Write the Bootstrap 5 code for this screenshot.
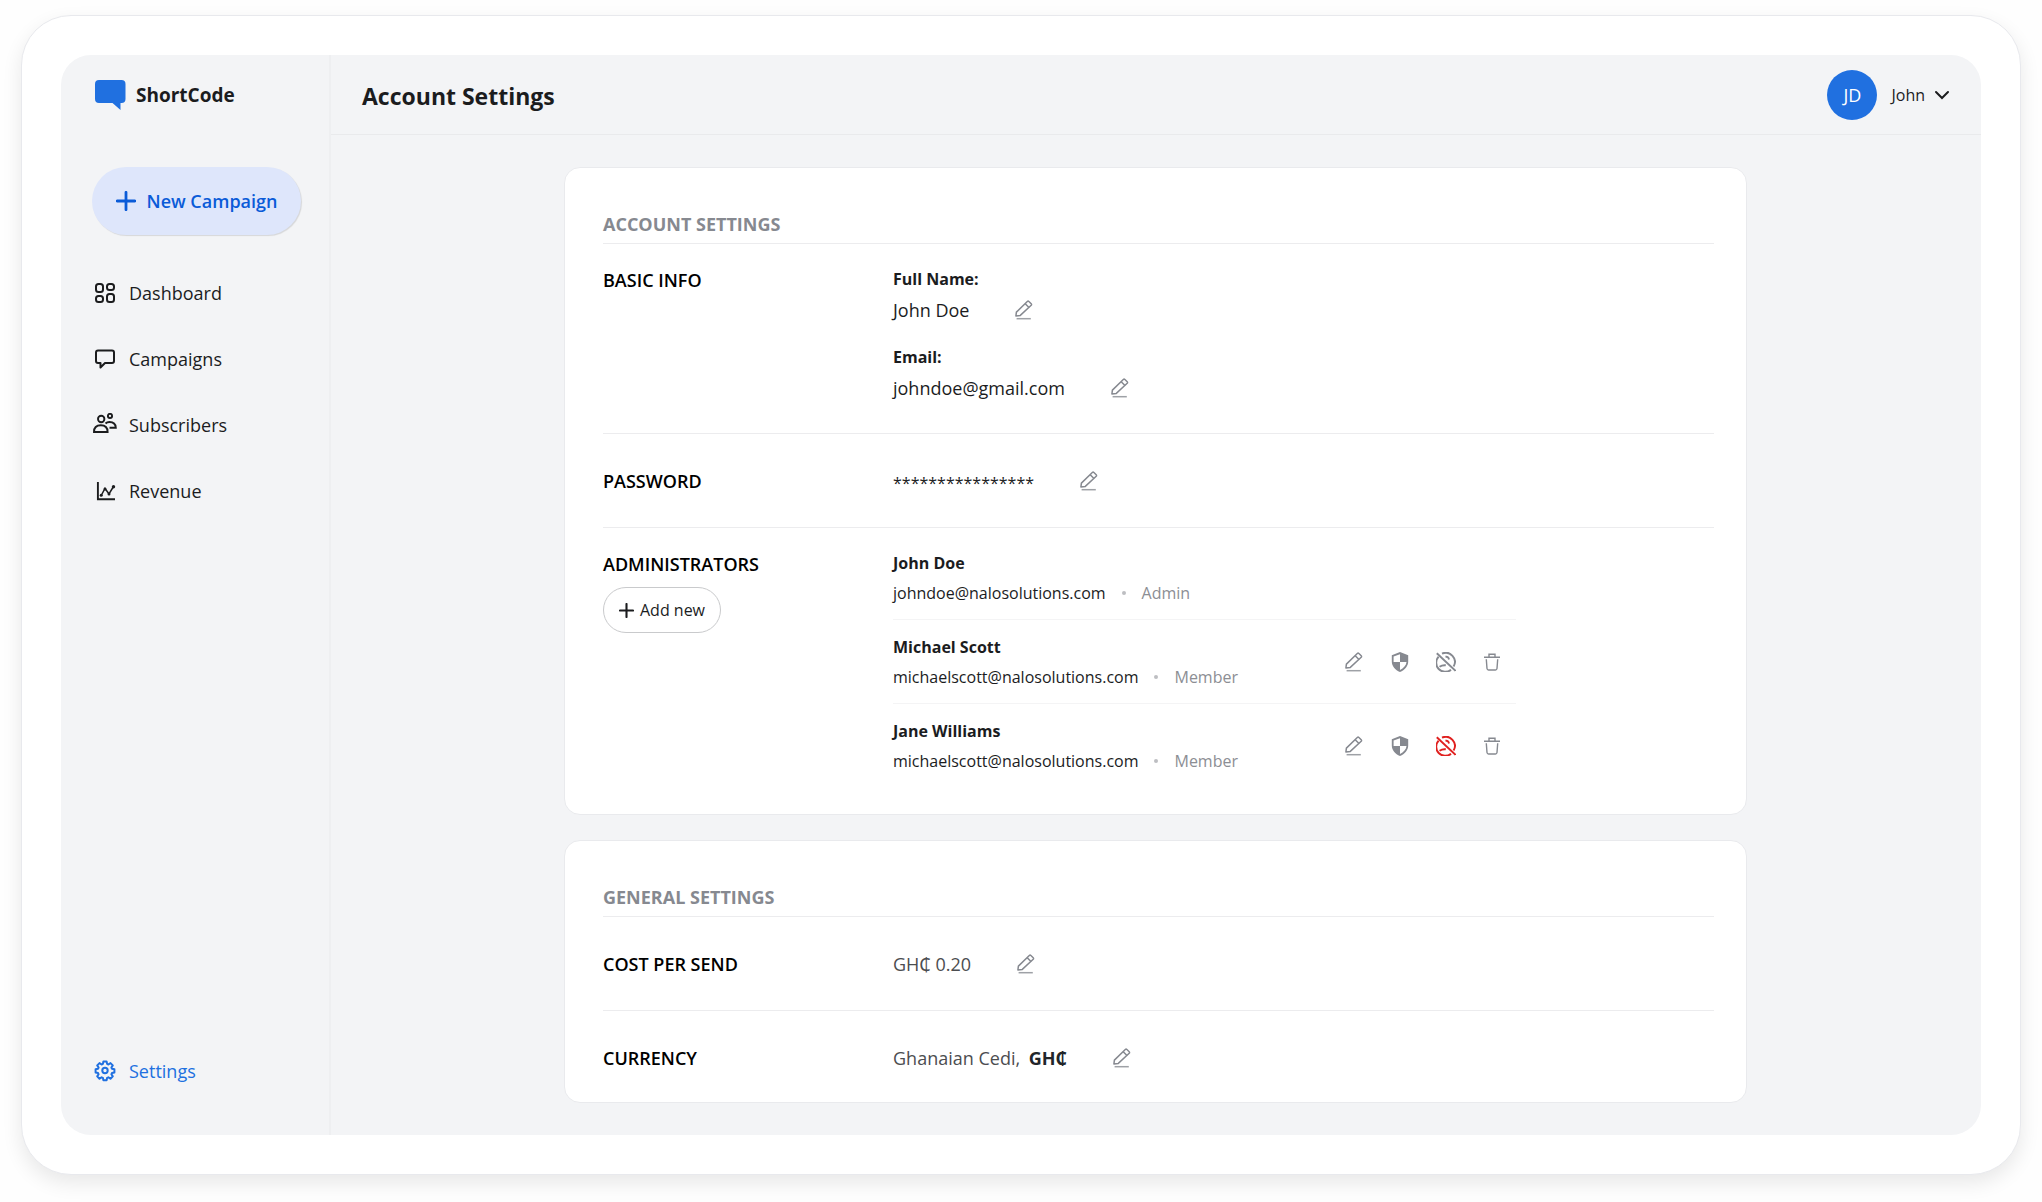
<!DOCTYPE html>
<html lang="en">
<head>
<meta charset="utf-8">
<meta name="viewport" content="width=device-width, initial-scale=1">
<title>ShortCode – Account Settings</title>
<link href="https://cdn.jsdelivr.net/npm/bootstrap@5.3.0/dist/css/bootstrap.min.css" rel="stylesheet">
<style>
  body { font-family: "Open Sans", "Noto Sans", sans-serif; color: #1b1c1e; background: #fefefe; padding: 15px 21px 27px 21px; font-size: 18px; line-height: 24px; }
  .frame { background: #fff; border: 1px solid #e8e9ed; border-radius: 50px; padding: 39px; box-shadow: 0 8px 20px rgba(0,0,0,.09); }
  .shell { background: #f3f4f6; border-radius: 30px; overflow: hidden; }
  .sidebar { width: 270px; border-right: 2px solid #eeeff1; padding: 25px 28px 52px 31px; }
  .brand { font-size: 19px; font-weight: 700; gap: 10px; padding-left: 3px; line-height: 30px; color: #1b1c1e; }
  .btn-campaign { height: 68px; margin-top: 57px; border-radius: 34px; background: #dee6fb; color: #0a5bd8; font-size: 18px; font-weight: 600; gap: 11px; box-shadow: 1px 1px 1px rgba(0,0,0,.12); border: 0; padding: 0; }
  .side-nav { gap: 42px; margin-top: 46px; }
  .side-nav .nav-link, .nav-link.settings { padding: 0; gap: 12px; color: #1b1c1e; margin-left: 1px; }
  .nav-link.settings { color: #2070e0; }
  .topbar { height: 80px; border-bottom: 1px solid #e9eaec; padding: 0 31px; }
  .topbar h1 { font-size: 23px; line-height: 32px; font-weight: 700; padding-top: 2px; }
  .avatar { width: 50px; height: 50px; background: #2070e0; color: #fff; font-weight: 500; font-size: 18px; margin-right: 5px; }
  .btn-user { gap: 9px; font-size: 16px; font-weight: 500; padding: 0; border: 0; color: #1b1c1e; line-height: 24px; }
  .content { padding: 32px 25px 32px 24px; gap: 25px; }
  .panel { width: 100%; max-width: 1183px; border: 1px solid #e9eaed; border-radius: 16px; background: #fff; padding: 44px 32px 0 38px; margin: 0 auto; }
  .panel h2 { font-size: 18px; line-height: 24px; font-weight: 700; color: #868990; padding-bottom: 7px; border-bottom: 1px solid #ececee; }
  .setting { border-bottom: 1px solid #ececee; padding: 34px 0 33px; }
  .setting.tall { padding-top: 23px; }
  .setting:last-child { border-bottom: 0; padding-bottom: 31px; }
  .setting-name { width: 290px; flex: none; }
  .setting-name h3 { font-size: 18px; line-height: 26px; font-weight: 600; color: #000; }
  .field-list { gap: 23px; }
  .caption { font-size: 16px; font-weight: 700; margin-bottom: 6px; }
  .field-list .caption { margin-bottom: 7px; }
  .value { gap: 45px; }
  .value-soft { color: #4c4d50; }
  .value-masked { font-size: 16px; line-height: 22px; }
  .btn-add { margin-top: 10px; height: 46px; width: 118px; border: 1px solid #c9cacc; border-radius: 23px; font-size: 16px; font-weight: 500; padding: 0; gap: 6px; color: #1b1c1e; }
  .icon-btn { border: 0; padding: 0; background: none; color: #868990; width: 20px; height: 20px; }
  .icon-btn.danger { color: #e0201f; }
  .icon-btn svg { display: block; }
  .admins { width: 623px; }
  .admin { padding: 15px 14px 14px 0; border-bottom: 1px solid #f4f4f5; font-size: 16px; }
  .admin:first-child { padding-top: 0; }
  .admin:last-child { border-bottom: 0; padding-bottom: 10px; }
  .role { color: #8c8e94; }
  .dot { width: 4px; height: 4px; background: #bdbec2; margin: 0 16px; }
  .actions { gap: 26px; }
</style>
</head>
<body class="min-vh-100 d-flex flex-column">
<svg class="d-none" aria-hidden="true">
  <symbol id="pencil" viewBox="0 0 20 20"><g fill="none" stroke="currentColor" stroke-width="1.5" stroke-linejoin="round"><path d="M1.900 16 2.400 12.100 13.300 1.500Q14.100.8 14.900 1.500L17.200 3.700Q17.900 4.500 17.200 5.300L6.300 15.400Z"/><path d="m11.200 3.700 3.800 3.800"/><path d="M2.600 18.700H16.800" opacity=".8"/></g></symbol>
  <symbol id="shield" viewBox="0 0 20 20"><path fill="currentColor" d="M10 0 18.200 3.200V9.500C18.200 14 14.800 18.200 10 20 5.200 18.200 1.800 14 1.800 9.500V3.200ZM10 2.200 3.600 4.600V10H10ZM10 10V17.900C13.600 16.200 16.200 13.300 16.500 10Z" fill-rule="evenodd"/></symbol>
  <symbol id="globe-off" viewBox="0 0 20 20"><g fill="none" stroke="currentColor" stroke-width="1.900"><path d="M.8 1.300 19.500 18.800"/><path d="M6 1.700A9 9 0 0 1 17.600 14.400M2.600 4.700A9 9 0 0 0 15 17.700"/><path d="M9.500 4.800Q12.500 4.300 13 7.500M3.500 14.800Q6.500 12.800 9.800 13.300"/></g></symbol>
  <symbol id="trash" viewBox="0 0 20 20"><g fill="none" stroke="currentColor" stroke-width="1.400"><path d="M2 5.200H18M7 5V2.300H13V5M4.300 7.200 5 16.500Q5.200 18 6.500 18H13.500Q14.800 18 15 16.500L15.700 7.200"/></g></symbol>
  <symbol id="plus" viewBox="0 0 20 20"><path d="M10 1.300V18.700M1.300 10H18.700" fill="none" stroke="currentColor" stroke-width="2.800" stroke-linecap="round"/></symbol>
</svg>
<div class="frame flex-grow-1 d-flex">
  <div class="shell d-flex flex-grow-1">
    <aside class="sidebar d-flex flex-column flex-shrink-0">
      <a href="#" class="brand d-flex align-items-center text-decoration-none">
        <svg width="31" height="30" viewBox="0 0 31 30" fill="#2070e0" aria-hidden="true"><path d="M4 0H26.500Q30.500 0 30.500 4V19Q30.500 23 26.500 23H25.500V30L17.500 23H4Q0 23 0 19V4Q0 0 4 0Z"/></svg>
        ShortCode
      </a>
      <button type="button" class="btn btn-campaign w-100 d-flex align-items-center justify-content-center"><svg width="20" height="20" aria-hidden="true"><use href="#plus"/></svg>New Campaign</button>
      <nav class="nav flex-column side-nav">
        <a href="#" class="nav-link d-flex align-items-center">
          <svg width="24" height="24" viewBox="0 0 24 24" fill="none" stroke="currentColor" stroke-width="2" aria-hidden="true"><rect x="3" y="3" width="7" height="8" rx="2.500"/><rect x="14" y="3" width="7" height="6" rx="2.500"/><rect x="3" y="15" width="7" height="6" rx="2.500"/><rect x="14" y="13" width="7" height="8" rx="2.500"/></svg>Dashboard</a>
        <a href="#" class="nav-link d-flex align-items-center">
          <svg width="24" height="24" viewBox="0 0 24 24" fill="none" stroke="currentColor" stroke-width="2" stroke-linejoin="round" aria-hidden="true"><path d="M5 3.500H19Q21 3.500 21 5.500V14Q21 16 19 16H12L7.500 20.500V16H5Q3 16 3 14V5.500Q3 3.500 5 3.500Z"/></svg>Campaigns</a>
        <a href="#" class="nav-link d-flex align-items-center">
          <svg width="24" height="24" viewBox="0 0 24 24" fill="none" stroke="currentColor" stroke-width="1.900" aria-hidden="true"><circle cx="8.200" cy="6" r="3.200"/><circle cx="17" cy="2.900" r="2.100"/><path d="M1 19Q1 12.300 7.800 12.300T14.600 19ZM12.500 10.500Q14 9 16.500 9 22.500 9 22.800 14.700H16.500"/></svg>Subscribers</a>
        <a href="#" class="nav-link d-flex align-items-center">
          <svg width="24" height="24" viewBox="0 0 24 24" fill="none" stroke="currentColor" stroke-width="1.900" aria-hidden="true"><path d="M4.900 3V20.200H22"/><path d="M8.200 16.500 12 9.500 16 15 20.500 7.500" stroke-width="1.500"/><g fill="currentColor" stroke="none"><circle cx="8.200" cy="16.300" r="1.500"/><circle cx="12" cy="10" r="1.500"/><circle cx="16" cy="15" r="1.500"/><circle cx="20.500" cy="7.800" r="1.700"/></g></svg>Revenue</a>
      </nav>
      <a href="#" class="nav-link settings mt-auto d-flex align-items-center" aria-current="page">
        <svg width="24" height="24" viewBox="0 0 24 24" fill="none" stroke="currentColor" stroke-width="2" stroke-linejoin="round" aria-hidden="true"><circle cx="12" cy="11.500" r="2.700"/><path d="M10.400 2.500h3.200l.5 2.400 1.300.6 2.100-1.400 2.300 2.300-1.400 2.100.6 1.300 2.400.5v3.200l-2.400.5-.6 1.300 1.400 2.100-2.300 2.300-2.100-1.400-1.300.6-.5 2.400h-3.200l-.5-2.400-1.300-.6-2.100 1.400-2.300-2.300 1.400-2.100-.6-1.300-2.400-.5v-3.200l2.400-.5.6-1.300-1.400-2.100 2.300-2.300 2.100 1.400 1.300-.6z"/></svg>Settings</a>
    </aside>
    <div class="flex-grow-1 d-flex flex-column">
      <header class="topbar d-flex align-items-center justify-content-between">
        <h1 class="m-0">Account Settings</h1>
        <button type="button" class="btn btn-user d-flex align-items-center" aria-haspopup="true"><span class="avatar rounded-circle d-flex align-items-center justify-content-center">JD</span>John
          <svg width="16" height="16" viewBox="0 0 16 16" fill="none" stroke="currentColor" stroke-width="2" stroke-linecap="round" aria-hidden="true"><path d="m2 5 6 6 6-6"/></svg></button>
      </header>
      <main class="content d-flex flex-column">
        <section class="panel">
          <h2 class="m-0">ACCOUNT SETTINGS</h2>
          <div class="setting tall d-flex">
            <div class="setting-name"><h3 class="m-0">BASIC INFO</h3></div>
            <div class="d-flex flex-column field-list">
              <div>
                <div class="caption">Full Name:</div>
                <div class="value d-flex align-items-center"><span>John Doe</span><button class="icon-btn" type="button" aria-label="Edit full name"><svg width="20" height="20"><use href="#pencil"/></svg></button></div>
              </div>
              <div>
                <div class="caption">Email:</div>
                <div class="value d-flex align-items-center"><span>johndoe@gmail.com</span><button class="icon-btn" type="button" aria-label="Edit email"><svg width="20" height="20"><use href="#pencil"/></svg></button></div>
              </div>
            </div>
          </div>
          <div class="setting d-flex align-items-center">
            <div class="setting-name"><h3 class="m-0">PASSWORD</h3></div>
            <div class="value d-flex align-items-center"><span class="value-masked pt-1">****************</span><button class="icon-btn" type="button" aria-label="Edit password"><svg width="20" height="20"><use href="#pencil"/></svg></button></div>
          </div>
          <div class="setting tall d-flex">
            <div class="setting-name"><h3 class="m-0">ADMINISTRATORS</h3>
              <button type="button" class="btn btn-add d-flex align-items-center justify-content-center"><svg width="15" height="15" aria-hidden="true"><use href="#plus"/></svg>Add new</button></div>
            <div class="admins">
              <div class="admin">
                <div class="caption">John Doe</div>
                <div class="d-flex align-items-center"><span>johndoe@nalosolutions.com</span><span class="dot rounded-circle"></span><span class="role">Admin</span></div>
              </div>
              <div class="admin d-flex justify-content-between align-items-center">
                <div>
                  <div class="caption">Michael Scott</div>
                  <div class="d-flex align-items-center"><span>michaelscott@nalosolutions.com</span><span class="dot rounded-circle"></span><span class="role">Member</span></div>
                </div>
                <div class="actions d-flex">
                  <button class="icon-btn" type="button" aria-label="Edit Michael Scott"><svg width="20" height="20"><use href="#pencil"/></svg></button>
                  <button class="icon-btn" type="button" aria-label="Permissions"><svg width="20" height="20"><use href="#shield"/></svg></button>
                  <button class="icon-btn" type="button" aria-label="Disable access"><svg width="20" height="20"><use href="#globe-off"/></svg></button>
                  <button class="icon-btn" type="button" aria-label="Delete"><svg width="20" height="20"><use href="#trash"/></svg></button>
                </div>
              </div>
              <div class="admin d-flex justify-content-between align-items-center">
                <div>
                  <div class="caption">Jane Williams</div>
                  <div class="d-flex align-items-center"><span>michaelscott@nalosolutions.com</span><span class="dot rounded-circle"></span><span class="role">Member</span></div>
                </div>
                <div class="actions d-flex">
                  <button class="icon-btn" type="button" aria-label="Edit Jane Williams"><svg width="20" height="20"><use href="#pencil"/></svg></button>
                  <button class="icon-btn" type="button" aria-label="Permissions"><svg width="20" height="20"><use href="#shield"/></svg></button>
                  <button class="icon-btn danger" type="button" aria-label="Enable access"><svg width="20" height="20"><use href="#globe-off"/></svg></button>
                  <button class="icon-btn" type="button" aria-label="Delete"><svg width="20" height="20"><use href="#trash"/></svg></button>
                </div>
              </div>
            </div>
          </div>
        </section>
        <section class="panel">
          <h2 class="m-0">GENERAL SETTINGS</h2>
          <div class="setting d-flex align-items-center">
            <div class="setting-name"><h3 class="m-0">COST PER SEND</h3></div>
            <div class="value value-soft d-flex align-items-center"><span>GH₵ 0.20</span><button class="icon-btn" type="button" aria-label="Edit cost per send"><svg width="20" height="20"><use href="#pencil"/></svg></button></div>
          </div>
          <div class="setting d-flex align-items-center">
            <div class="setting-name"><h3 class="m-0">CURRENCY</h3></div>
            <div class="value value-soft d-flex align-items-center"><span>Ghanaian Cedi, <b class="text-dark ms-1">GH₵</b></span><button class="icon-btn" type="button" aria-label="Edit currency"><svg width="20" height="20"><use href="#pencil"/></svg></button></div>
          </div>
        </section>
      </main>
    </div>
  </div>
</div>
<script src="https://cdn.jsdelivr.net/npm/bootstrap@5.3.0/dist/js/bootstrap.bundle.min.js"></script>
</body>
</html>
